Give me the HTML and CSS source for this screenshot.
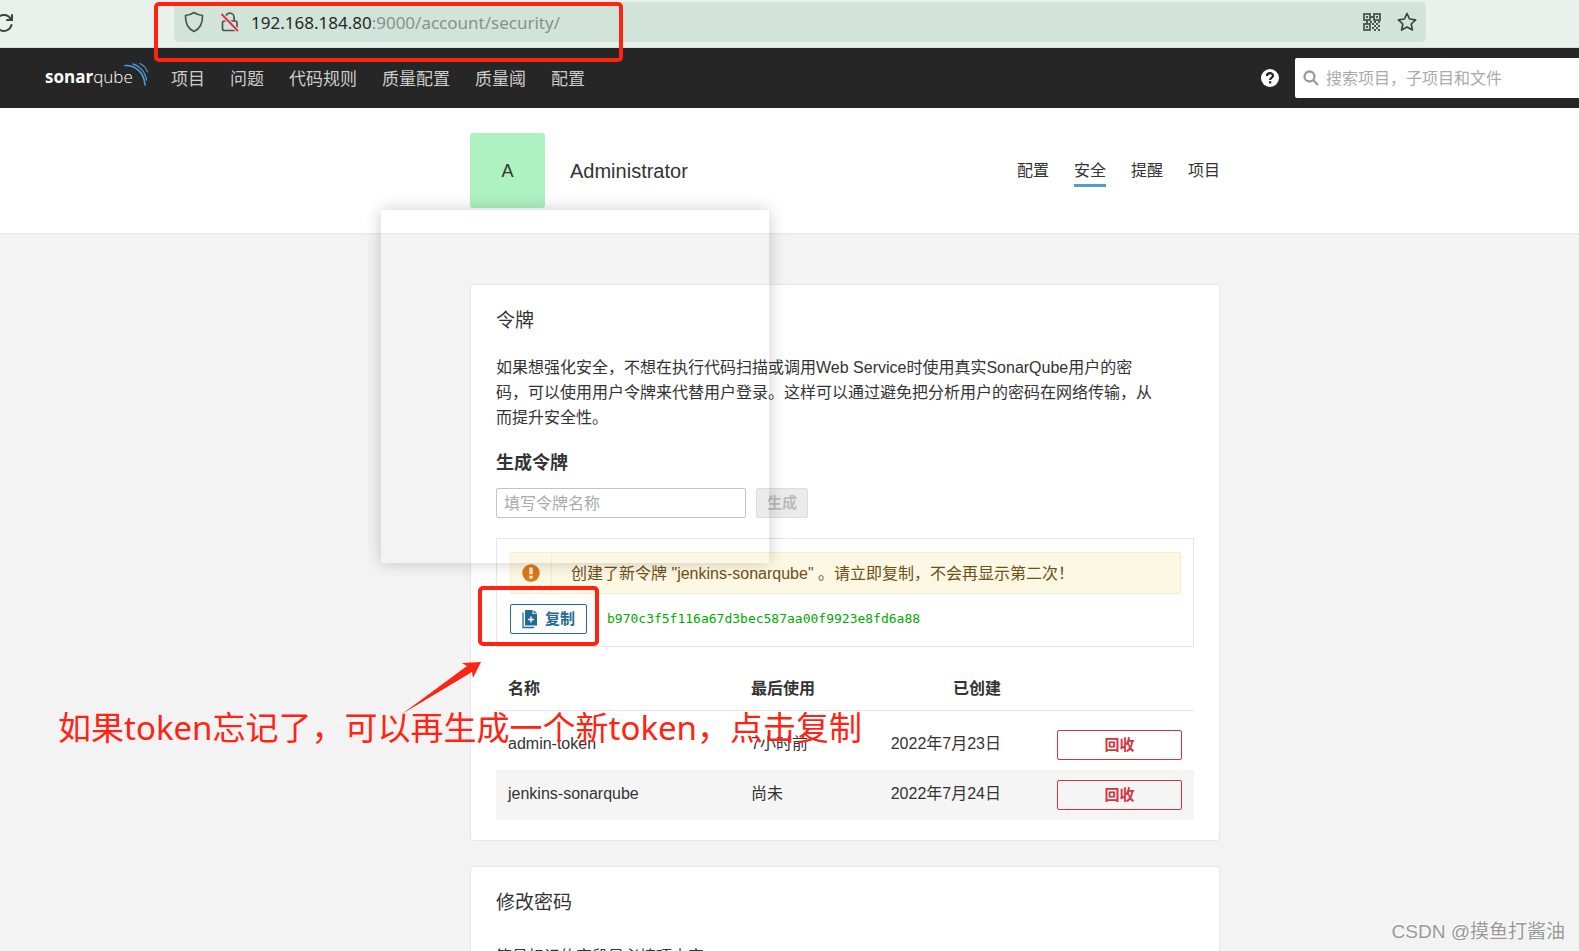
FILE: index.html
```html
<!DOCTYPE html>
<html lang="zh-CN">
<head>
<meta charset="utf-8">
<title>安全 - SonarQube</title>
<link rel="stylesheet" href="styles.css">
</head>
<body>
<div class="browser-bar">
  <button class="icon-button reload" aria-label="Reload">
    <svg width="20" height="20" viewBox="0 0 20 20" fill="none" stroke="#3b4540" stroke-width="2" stroke-linecap="round"><path d="M17 7.5A8 8 0 1 0 17.500 13"/><path d="M18 3v5h-5"/></svg>
  </button>
  <div class="url-field">
    <svg class="shield" width="20" height="22" viewBox="0 0 20 22" fill="none" stroke="#4b5650" stroke-width="1.700" stroke-linejoin="round"><path d="M10 1.500C7.500 3.300 4.500 4.300 1.500 4.500C1.300 11 3.500 17.500 10 20.500C16.500 17.500 18.700 11 18.500 4.500C15.500 4.300 12.500 3.300 10 1.500Z"/></svg>
    <svg width="20" height="22" viewBox="0 0 20 22" fill="none" stroke="#4b5650" stroke-width="1.700"><rect x="2.500" y="10" width="14.500" height="9.500" rx="2"/><path d="M5.500 10V6.500a4.300 4.300 0 0 1 8.600 0V10"/><path d="M1.500 3L18 20" stroke="#d2e4da" stroke-width="4"/><path d="M1.500 3L18 20" stroke="#f0204f" stroke-width="1.800"/></svg>
    <span class="url"><b>192.168.184.80</b>:9000/account/security/</span>
    <svg width="18" height="18" viewBox="0 0 18 18" fill="none" stroke="#4b5650" stroke-width="1.800"><rect x="1" y="1" width="6" height="6"/><rect x="11" y="1" width="6" height="6"/><rect x="1" y="11" width="6" height="6"/><path d="M3 4h2M13 4h2M3 14h2M7 4h4M4 7v4" stroke-width="2"/><path d="M7 9h2M11 9h2M15 9h2M9 11h2M13 11h2M11 13h2M15 13h2M9 15h2M13 15h2M11 17h2M15 17h2" stroke-width="2"/></svg>
    <svg width="20" height="20" viewBox="0 0 20 20" fill="none" stroke="#3b4540" stroke-width="1.700" stroke-linejoin="round"><path d="M10 1.500l2.600 5.500 6 .8-4.400 4.200 1.200 6-5.400-3-5.400 3 1.200-6L1.400 7.800l6-.8z"/></svg>
  </div>
</div>

<div class="page">
  <header class="navbar">
    <a class="logo" href="#"><span><b>sonar</b>qube</span>
      <svg width="26" height="26" viewBox="0 0 26 26" fill="none" stroke="#4b9fd5" stroke-linecap="round"><path d="M1 3.500C11 3 20 10 21 23" stroke-width="1.600"/><path d="M9 2C15 3.500 21 9 22.500 18" stroke-width="1.300"/><path d="M16 1.500C19 3 22 6 23.500 10" stroke-width="1.100"/></svg>
    </a>
    <nav class="main-nav">
      <a href="#">项目</a><a href="#">问题</a><a href="#">代码规则</a><a href="#">质量配置</a><a href="#">质量阈</a><a href="#">配置</a>
    </nav>
    <button class="icon-button" aria-label="Help">
      <svg width="18" height="18" viewBox="0 0 18 18"><circle cx="9" cy="9" r="9" fill="#fff"/><path d="M6 7C6 3.300 12 3.300 12 6.700C12 8.800 9.100 8.600 9.100 11" fill="none" stroke="#262626" stroke-width="2.200"/><rect x="8" y="12.200" width="2.300" height="2.300" fill="#262626"/></svg>
    </button>
    <label class="search">
      <svg width="16" height="16" viewBox="0 0 16 16" fill="none" stroke="#999" stroke-width="2.300"><circle cx="6.500" cy="6.500" r="5"/><path d="M10.200 10.200L15 15"/></svg>
      <input type="text" placeholder="搜索项目，子项目和文件" aria-label="搜索">
    </label>
  </header>

  <div class="account-header">
    <div class="container account-row">
      <div class="avatar">A</div>
      <h1>Administrator</h1>
      <nav class="account-nav">
        <a href="#">配置</a><a class="active" href="#">安全</a><a href="#">提醒</a><a href="#">项目</a>
      </nav>
    </div>
  </div>

  <main class="container content">
    <section class="card">
      <h2>令牌</h2>
      <p class="intro">如果想强化安全，不想在执行代码扫描或调用Web Service时使用真实SonarQube用户的密<br>码，可以使用用户令牌来代替用户登录。这样可以通过避免把分析用户的密码在网络传输，从<br>而提升安全性。</p>
      <h3>生成令牌</h3>
      <form class="generate">
        <input type="text" placeholder="填写令牌名称" aria-label="填写令牌名称">
        <button type="button" disabled>生成</button>
      </form>
      <div class="new-token">
        <div class="alert">
          <div class="alert-icon"><svg width="18" height="18" viewBox="0 0 18 18"><circle cx="9" cy="9" r="8.700" fill="#db781a"/><path d="M7.300 3.500h3.400v6.700H7.300zM7.300 11.800h3.400v2.700H7.300z" fill="#fcf8e3"/><path d="M8.500 4.500h1v4.700h-1z" fill="#db781a" opacity=".35"/></svg></div>
          <div class="alert-text">创建了新令牌 "jenkins-sonarqube" 。请立即复制，不会再显示第二次！</div>
        </div>
        <div class="token-row">
          <button type="button" class="copy">
            <svg width="16" height="20" viewBox="0 0 16 20"><path d="M1 3.500V18.500H12" fill="none" stroke="#236a97" stroke-width="1.300"/><path d="M3 1h7.500v4H15v11.500H3z" fill="#236a97"/><path d="M11.500 1L15 4.200h-3.500z" fill="#236a97"/><path d="M9 7.500v6M6 10.500h6" stroke="#fff" stroke-width="1.400"/></svg>复制</button>
          <code>b970c3f5f116a67d3bec587aa00f9923e8fd6a88</code>
        </div>
      </div>
      <table class="tokens">
        <thead><tr><th class="col-name">名称</th><th class="col-used">最后使用</th><th class="col-created">已创建</th><th class="col-action"></th></tr></thead>
        <tbody>
          <tr class="spacer"><td colspan="4"></td></tr>
          <tr><td>admin-token</td><td>7小时前</td><td class="col-created">2022年7月23日</td><td class="col-action"><button type="button" class="revoke">回收</button></td></tr>
          <tr class="striped"><td>jenkins-sonarqube</td><td>尚未</td><td class="col-created">2022年7月24日</td><td class="col-action"><button type="button" class="revoke">回收</button></td></tr>
        </tbody>
      </table>
    </section>
    <section class="card">
      <h2>修改密码</h2>
      <p class="intro required-hint">符号标记的字段是必填项内容</p>
    </section>
  </main>
</div>

<div class="ghost-window"></div>
<div class="mark mark-url"></div>
<div class="mark mark-copy"></div>
<svg class="arrow" width="84" height="56" viewBox="0 0 84 56"><path d="M81 2L62 3L67 6L2 54L72 12L73 18Z" fill="#ff2313"/></svg>
<div class="note">如果token忘记了，可以再生成一个新token，点击复制</div>
<div class="watermark">CSDN @摸鱼打酱油</div>
</body>
</html>
```
FILE: styles.css
```css
* { box-sizing: border-box; }
html, body { height: 100%; }
body {
  margin: 0;
  position: relative;
  overflow: hidden;
  background: #f3f3f3;
  color: #333;
  font: 16px/24px "Liberation Sans", "Noto Sans CJK SC", sans-serif;
}
h1, h2, h3, p { margin: 0; font-weight: 400; }
a { color: inherit; text-decoration: none; }
button, input { font: inherit; color: inherit; }
svg { display: block; flex: none; }
.icon-button { padding: 0; border: 0; background: none; }

/* Browser toolbar */
.browser-bar {
  display: flex;
  align-items: flex-start;
  justify-content: space-between;
  height: 48px;
  padding-top: 2px;
  background: #e8f1eb;
  border-bottom: 1px solid #d2e4da;
}
.reload { margin: 10px 0 0 -6px; }
.url-field {
  display: flex;
  align-items: center;
  gap: 16px;
  flex: 1;
  height: 40px;
  margin: 0 153px 0 160px;
  padding: 0 9px 0 10px;
  border-radius: 5px;
  background: #d2e4da;
}
.url {
  flex: 1;
  margin-left: -5px;
  padding-top: 2px;
  color: #86928b;
  font-family: "Noto Sans", sans-serif;
  font-size: 17px;
}
.url b { font-weight: 400; color: #1f2a24; }

/* Application header */
.page { width: calc(100% + 111px); }
.navbar {
  display: flex;
  align-items: center;
  height: 60px;
  padding: 0 25px 0 45px;
  background: #262626;
  color: #ccc;
  font-size: 17px;
}
.logo {
  position: relative;
  width: 126px;
  padding-bottom: 2px;
  color: #fff;
  font: 300 17px/24px "Open Sans", sans-serif;
}
.logo b { font-weight: 700; }
.logo svg { position: absolute; left: 79px; top: -3px; }
.main-nav { display: flex; flex: 1; gap: 25px; padding-top: 3px; }
.search {
  display: flex;
  align-items: center;
  gap: 7px;
  width: 370px;
  height: 40px;
  margin-left: 16px;
  padding: 0 8px;
  border-radius: 2px;
  background: #fff;
}
.search input { flex: 1; border: 0; padding: 2px 0 0; outline: 0; background: none; font-size: 16px; }
::placeholder { color: #aaa; opacity: 1; }

.container { width: 750px; margin: 0 auto; }
.account-header { height: 126px; padding-top: 25px; background: #fff; border-bottom: 1px solid #e6e6e6; }
.account-row { display: flex; align-items: center; }
.avatar {
  width: 75px;
  height: 75px;
  border-radius: 3px;
  background: #adf2c0;
  text-align: center;
  font-size: 18px;
  line-height: 77px;
}
.account-row h1 { flex: 1; margin-left: 25px; font-size: 20px; }
.account-nav { display: flex; gap: 25px; }
.account-nav a { padding: 4px 0 1px; border-bottom: 3px solid transparent; }
.account-nav .active { border-color: #4b9fd5; }

/* Cards */
.content { display: flex; flex-direction: column; gap: 25px; padding-top: 50px; }
.card { padding: 24px 25px 20px; background: #fff; border: 1px solid #e6e6e6; border-radius: 3px; }
h2 { font-size: 19px; }
.intro { margin-top: 22px; line-height: 25px; white-space: nowrap; }
.required-hint { margin-top: 29px; }
h3 { margin-top: 21px; font-size: 18px; font-weight: 700; }
.generate { display: flex; gap: 10px; margin-top: 13px; }
.generate input {
  width: 250px;
  height: 30px;
  padding: 2px 7px 0;
  border: 1px solid #c4c4c4;
  border-radius: 2px;
}
.generate button {
  width: 52px;
  height: 30px;
  padding: 0;
  border: 1px solid #ddd;
  border-radius: 2px;
  background: #ebebeb;
  color: #bbb;
  font-size: 15px;
  font-weight: 700;
}
.new-token { margin-top: 20px; padding: 13px 12px 12px 13px; border: 1px solid #e6e6e6; }
.alert {
  display: flex;
  height: 42px;
  border: 1px solid #faebcc;
  border-radius: 2px;
  background: #fcf8e3;
  color: #6f4f17;
  line-height: 42px;
}
.alert-icon { display: flex; align-items: center; justify-content: center; width: 41px; border-right: 1px solid #faebcc; }
.alert-text { padding-left: 19px; }
.token-row { display: flex; align-items: center; gap: 20px; margin-top: 10px; }
.copy {
  display: flex;
  align-items: center;
  justify-content: center;
  gap: 7px;
  width: 77px;
  height: 30px;
  padding: 0;
  border: 1px solid #236a97;
  border-radius: 2px;
  background: #fff;
  color: #236a97;
  font-size: 15px;
  font-weight: 700;
}
code { color: #00aa00; font: 13px/24px "DejaVu Sans Mono", monospace; }

.tokens { width: 100%; margin-top: 16px; border-collapse: collapse; table-layout: fixed; }
.tokens th, .tokens td { padding: 0 12px; text-align: left; white-space: nowrap; }
.tokens th { height: 47px; padding-top: 6px; border-bottom: 1px solid #e6e6e6; }
.tokens td { height: 50px; padding-bottom: 3px; }
.tokens .spacer td { height: 10px; padding: 0; }
.col-name { width: 243px; }
.col-used { width: 127px; }
.col-created { width: 147px; }
.tokens .col-created { text-align: right; }
.tokens td.col-action { padding-bottom: 0; text-align: right; }
.striped { background: #f5f5f5; }
.revoke {
  display: inline-block;
  vertical-align: middle;
  width: 125px;
  height: 30px;
  padding: 0;
  border: 1px solid #d4333f;
  border-radius: 2px;
  background: transparent;
  color: #d4333f;
  font-size: 15px;
  font-weight: 700;
}

/* Annotations over the page */
.ghost-window, .mark, .arrow, .note, .watermark { position: absolute; pointer-events: none; }
.ghost-window { left: 381px; top: 210px; width: 388px; height: 353px; box-shadow: 0 0 16px rgba(0, 0, 0, .2); }
.mark { border: 4px solid #ff2313; border-radius: 5px; }
.mark-url { left: 154px; top: 2px; width: 469px; height: 60px; }
.mark-copy { left: 478px; top: 586px; width: 121px; height: 60px; }
.arrow { left: 400px; top: 660px; }
.note {
  left: 58px;
  top: 704px;
  color: #ff2313;
  font: 33px/48px "Noto Sans", "Noto Sans CJK SC", sans-serif;
  white-space: nowrap;
}
.watermark {
  right: 14px;
  bottom: 5px;
  color: #999;
  font: 19px/28px "Liberation Sans", "Noto Sans CJK SC", sans-serif;
  text-shadow: -1px -1px 0 #fff;
}
```
